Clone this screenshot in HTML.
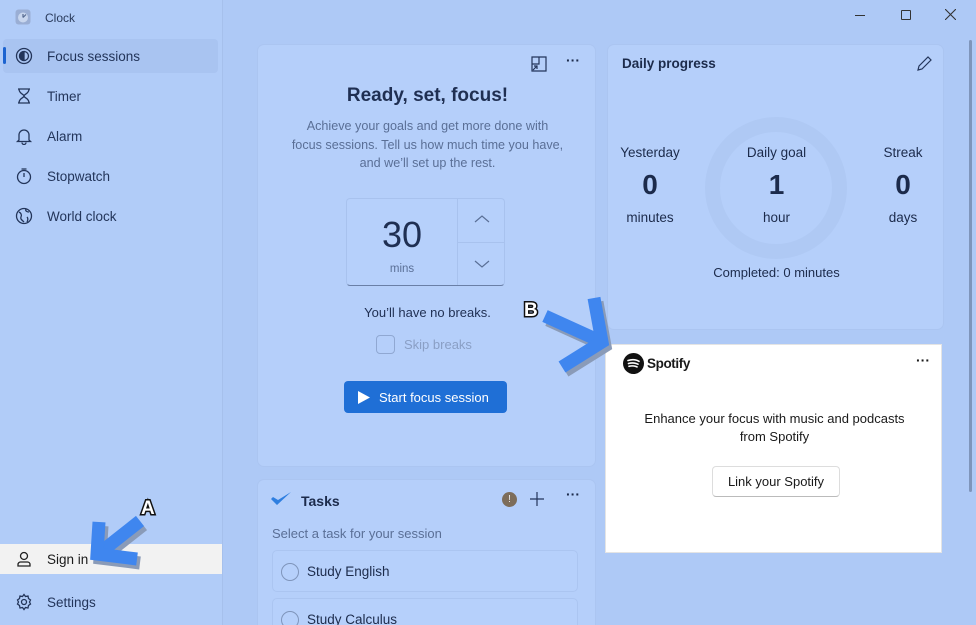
<!DOCTYPE html><html><head><style>
*{box-sizing:border-box;margin:0;padding:0}
html,body{width:976px;height:625px;overflow:hidden}
body{background:#aec9f6;font-family:"Liberation Sans",sans-serif;color:#1c2b4b;position:relative}
.side{position:absolute;left:0;top:0;width:223px;height:625px;background:#b1ccf8;border-right:1px solid #a6c0ec}
.nav{position:absolute;left:0;height:34px;width:218px;display:flex;align-items:center;font-size:13.5px;color:#23355a}
.nav svg{position:absolute;left:15px}
.nav span{position:absolute;left:47px}
.card{position:absolute;background:#b5cffa;border:1px solid #abc5f1;border-radius:7px}
.c{text-align:center}
.abs{position:absolute}
</style></head><body>
<div class="side">
 <svg class="abs" style="left:15px;top:9px" width="16" height="16" viewBox="0 0 16 16"><rect x="0.5" y="0.5" width="15" height="15" rx="3" fill="#9aaed4"/><circle cx="8" cy="8.5" r="5" fill="#c8d6ee"/><path d="M8 8.5l3-3M8 8.5V5" stroke="#55698f" stroke-width="1.2"/></svg>
 <div class="abs" style="left:45px;top:11px;font-size:12px;color:#2a3b5c">Clock</div>
 <div class="nav" style="top:39px;background:#a9c4f1;border-radius:4px;left:3px;width:215px"></div>
 <div class="abs" style="left:3px;top:47px;width:3px;height:17px;background:#1c63d0;border-radius:2px"></div>
 <div class="nav" style="top:39px"><svg width="18" height="18" viewBox="0 0 18 18" fill="none" stroke="#23355a" stroke-width="1.3"><circle cx="9" cy="9" r="7.5"/><circle cx="9" cy="9" r="4.5"/><path d="M9 4.5A4.5 4.5 0 0 0 9 13.5Z" fill="#23355a"/></svg><span>Focus sessions</span></div>
 <div class="nav" style="top:79px"><svg width="18" height="18" viewBox="0 0 18 18" fill="none" stroke="#23355a" stroke-width="1.3"><path d="M3 2h12M3 16h12M4 2c0 5 5 5 5 7s-5 2-5 7M14 2c0 5-5 5-5 7s5 2 5 7"/></svg><span>Timer</span></div>
 <div class="nav" style="top:119px"><svg width="18" height="18" viewBox="0 0 18 18" fill="none" stroke="#23355a" stroke-width="1.3"><path d="M4 13V8a5 5 0 0 1 10 0v5l1.5 1.5h-13zM7 15.5a2 2 0 0 0 4 0"/></svg><span>Alarm</span></div>
 <div class="nav" style="top:159px"><svg width="18" height="18" viewBox="0 0 18 18" fill="none" stroke="#23355a" stroke-width="1.3"><circle cx="9" cy="10" r="6.5"/><path d="M6.5 2h5M9 10V6"/></svg><span>Stopwatch</span></div>
 <div class="nav" style="top:199px"><svg width="18" height="18" viewBox="0 0 18 18" fill="none" stroke="#23355a" stroke-width="1.3"><circle cx="9" cy="9" r="7.5"/><path d="M4 5c2 1 3 3 2 5s1 3 3 5M11 2c-1 2 1 3 3 3M12 10c1 1 1 3 0 5"/></svg><span>World clock</span></div>
 <div class="nav" style="top:544px;height:30px;background:#f2f2f2;width:222px;color:#1a1a1a"><svg width="18" height="18" viewBox="0 0 18 18" fill="none" stroke="#222" stroke-width="1.3"><circle cx="9" cy="6" r="3.5"/><path d="M3 16v-1.5A2.5 2.5 0 0 1 5.5 12h7a2.5 2.5 0 0 1 2.5 2.5V16z"/></svg><span>Sign in</span></div>
 <div class="nav" style="top:585px"><svg width="18" height="18" viewBox="0 0 18 18" fill="none" stroke="#23355a" stroke-width="1.3"><circle cx="9" cy="9" r="2.5"/><path d="M9 1.5l1.5 2 2.5-.5.5 2.5 2 1.5-1 2 1 2-2 1.5-.5 2.5-2.5-.5-1.5 2-1.5-2-2.5.5-.5-2.5-2-1.5 1-2-1-2 2-1.5.5-2.5 2.5.5z"/></svg><span>Settings</span></div>
</div>
<div class="abs" style="left:855px;top:15px;width:10px;border-top:1px solid #333"></div>
<div class="abs" style="left:901px;top:10px;width:10px;height:10px;border:1px solid #333;border-radius:1px"></div>
<svg class="abs" style="left:945px;top:9px" width="11" height="11" viewBox="0 0 11 11" stroke="#333" stroke-width="1.1"><path d="M0 0l11 11M11 0L0 11"/></svg>
<div class="abs" style="left:969px;top:40px;width:3px;height:452px;background:#7f95bb;border-radius:2px"></div>

<div class="card" style="left:257px;top:44px;width:339px;height:423px">
 <svg class="abs" style="left:273px;top:11px" width="16" height="16" viewBox="0 0 16 16" fill="none" stroke="#23355a" stroke-width="1.2"><path d="M1 1h7v7H1zM8 1h7v14H8M1 8v7h7M2 14l4-4M3 10h3v3"/></svg>
 <div class="abs" style="left:308px;top:7px;font-size:14px;font-weight:bold">···</div>
 <div class="abs c" style="left:0;width:339px;top:40px;font-size:19px;font-weight:bold;color:#1f2f52">Ready, set, focus!</div>
 <div class="abs c" style="left:0;width:339px;top:72px;font-size:12.6px;line-height:18.5px;color:#5a6f96;white-space:nowrap">Achieve your goals and get more done with<br>focus sessions. Tell us how much time you have,<br>and we’ll set up the rest.</div>
 <div class="abs" style="left:88px;top:153px;width:159px;height:88px;border:1px solid #a8c2ee;border-bottom:1.5px solid #6a7fa6;border-radius:4px;background:#b6d0fb">
  <div class="abs c" style="left:0;width:110px;top:15px;font-size:36px;color:#1f2f52">30</div>
  <div class="abs c" style="left:0;width:110px;top:64px;font-size:11.5px;color:#5a6f96">mins</div>
  <div class="abs" style="left:110px;top:0;width:1px;height:86px;background:#a8c2ee"></div>
  <div class="abs" style="left:111px;top:43px;width:47px;height:1px;background:#a8c2ee"></div>
  <svg class="abs" style="left:127px;top:15px" width="16" height="10" viewBox="0 0 16 10" fill="none" stroke="#5a6f96" stroke-width="1.2"><path d="M1 8l7-6 7 6"/></svg>
  <svg class="abs" style="left:127px;top:60px" width="16" height="10" viewBox="0 0 16 10" fill="none" stroke="#5a6f96" stroke-width="1.2"><path d="M1 2l7 6 7-6"/></svg>
 </div>
 <div class="abs c" style="left:0;width:339px;top:260px;font-size:13px;color:#1f2f52">You’ll have no breaks.</div>
 <div class="abs" style="left:118px;top:290px;width:19px;height:19px;border:1px solid #90a8d2;border-radius:4px"></div>
 <div class="abs" style="left:146px;top:292px;font-size:13px;color:#8a9fc5">Skip breaks</div>
 <div class="abs" style="left:86px;top:336px;width:163px;height:32px;background:#1f6fd6;border-radius:4px;color:#fff;font-size:13px">
  <svg class="abs" style="left:13px;top:9px" width="14" height="15" viewBox="0 0 14 15"><path d="M1 1l12 6.5L1 14z" fill="#fff"/></svg>
  <span class="abs" style="left:35px;top:9px">Start focus session</span></div>
</div>

<div class="card" style="left:257px;top:479px;width:339px;height:160px">
 <svg class="abs" style="left:12px;top:11px" width="22" height="16" viewBox="0 0 22 16"><path d="M1 8l6 6L21 1l-13 8-5-3z" fill="#2f7fe0"/></svg>
 <div class="abs" style="left:43px;top:13px;font-size:14px;font-weight:bold">Tasks</div>
 <div class="abs" style="left:244px;top:12px;width:15px;height:15px;border-radius:50%;background:#7d6d5a;color:#eee;font-size:10px;text-align:center;line-height:15px">!</div>
 <svg class="abs" style="left:272px;top:12px" width="14" height="14" viewBox="0 0 14 14" stroke="#23355a" stroke-width="1.2"><path d="M7 0v14M0 7h14"/></svg>
 <div class="abs" style="left:308px;top:6px;font-size:14px;font-weight:bold">···</div>
 <div class="abs" style="left:14px;top:46px;font-size:13px;color:#5a6f96">Select a task for your session</div>
 <div class="abs" style="left:14px;top:70px;width:306px;height:42px;border:1px solid #abc5f1;border-radius:5px;background:#b6d0fb"><div class="abs" style="left:8px;top:12px;width:18px;height:18px;border:1.3px solid #7f95bb;border-radius:50%"></div><span class="abs" style="left:34px;top:13px;font-size:13.5px">Study English</span></div>
 <div class="abs" style="left:14px;top:118px;width:306px;height:42px;border:1px solid #abc5f1;border-radius:5px;background:#b6d0fb"><div class="abs" style="left:8px;top:12px;width:18px;height:18px;border:1.3px solid #7f95bb;border-radius:50%"></div><span class="abs" style="left:34px;top:13px;font-size:13.5px">Study Calculus</span></div>
</div>

<div class="card" style="left:607px;top:44px;width:337px;height:286px">
 <div class="abs" style="left:14px;top:11px;font-size:13.5px;font-weight:bold">Daily progress</div>
 <svg class="abs" style="left:308px;top:10px" width="17" height="17" viewBox="0 0 17 17" fill="none" stroke="#23355a" stroke-width="1.2"><path d="M2 15l1-4L12 2l3 3-9 9z"/></svg>
 <div class="abs" style="left:97px;top:72px;width:142px;height:142px;border-radius:50%;border:15px solid #afc9f4"></div>
 <div class="abs c" style="left:0;width:84px;top:100px;font-size:13.5px">Yesterday</div>
 <div class="abs c" style="left:0;width:84px;top:124px;font-size:28px;font-weight:bold">0</div>
 <div class="abs c" style="left:0;width:84px;top:165px;font-size:13.5px">minutes</div>
 <div class="abs c" style="left:110px;width:117px;top:100px;font-size:13.5px">Daily goal</div>
 <div class="abs c" style="left:110px;width:117px;top:124px;font-size:28px;font-weight:bold">1</div>
 <div class="abs c" style="left:110px;width:117px;top:165px;font-size:13.5px">hour</div>
 <div class="abs c" style="left:253px;width:84px;top:100px;font-size:13.5px">Streak</div>
 <div class="abs c" style="left:253px;width:84px;top:124px;font-size:28px;font-weight:bold">0</div>
 <div class="abs c" style="left:253px;width:84px;top:165px;font-size:13.5px">days</div>
 <div class="abs c" style="left:0;width:337px;top:220px;font-size:13px">Completed: 0 minutes</div>
</div>

<div class="abs" style="left:605px;top:344px;width:337px;height:209px;background:#fff;border:1px solid #e4e4e4;color:#1a1a1a">
 <svg class="abs" style="left:17px;top:8px" width="21" height="21" viewBox="0 0 21 21"><circle cx="10.5" cy="10.5" r="10.5" fill="#111"/><path d="M5 7.5c4-1.3 8-1 11 .8M5.5 10.5c3.5-1 6.5-.7 9.5.7M6 13.3c3-.8 5.5-.5 8 .6" stroke="#fff" stroke-width="1.6" fill="none" stroke-linecap="round"/></svg>
 <div class="abs" style="left:41px;top:11px;font-size:13.5px;font-weight:bold;letter-spacing:-.4px">Spotify</div>
 <div class="abs" style="left:310px;top:7px;font-size:14px;font-weight:bold">···</div>
 <div class="abs c" style="left:0;width:337px;top:65px;font-size:13px;line-height:18px">Enhance your focus with music and podcasts<br>from Spotify</div>
 <div class="abs c" style="left:106px;top:121px;width:128px;height:31px;border:1px solid #ddd;border-bottom-color:#bbb;border-radius:4px;font-size:13px;line-height:29px">Link your Spotify</div>
</div>

<svg class="abs" style="left:0;top:0" width="976" height="625" viewBox="0 0 976 625">
 <g fill="none" stroke-width="13" stroke-linejoin="miter" stroke-linecap="butt">
  <g stroke="#8a9bb8" transform="translate(3,4)">
   <path d="M545 316l55 25"/><path d="M594 298l8 44-40 25"/>
   <path d="M140 521l-38 30"/><path d="M99 522l-2 32 40 5"/>
  </g>
  <g stroke="#3f86ef">
   <path d="M545 316l55 25"/><path d="M594 298l8 44-40 25"/>
   <path d="M140 521l-38 30"/><path d="M99 522l-2 32 40 5"/>
  </g>
 </g>
 <text x="524" y="316" font-family="Liberation Sans" font-weight="bold" font-size="19" fill="#fff" stroke="#111" stroke-width="3" paint-order="stroke">B</text>
 <text x="141" y="514" font-family="Liberation Sans" font-weight="bold" font-size="19" fill="#fff" stroke="#111" stroke-width="3" paint-order="stroke">A</text>
</svg>
</body></html>
